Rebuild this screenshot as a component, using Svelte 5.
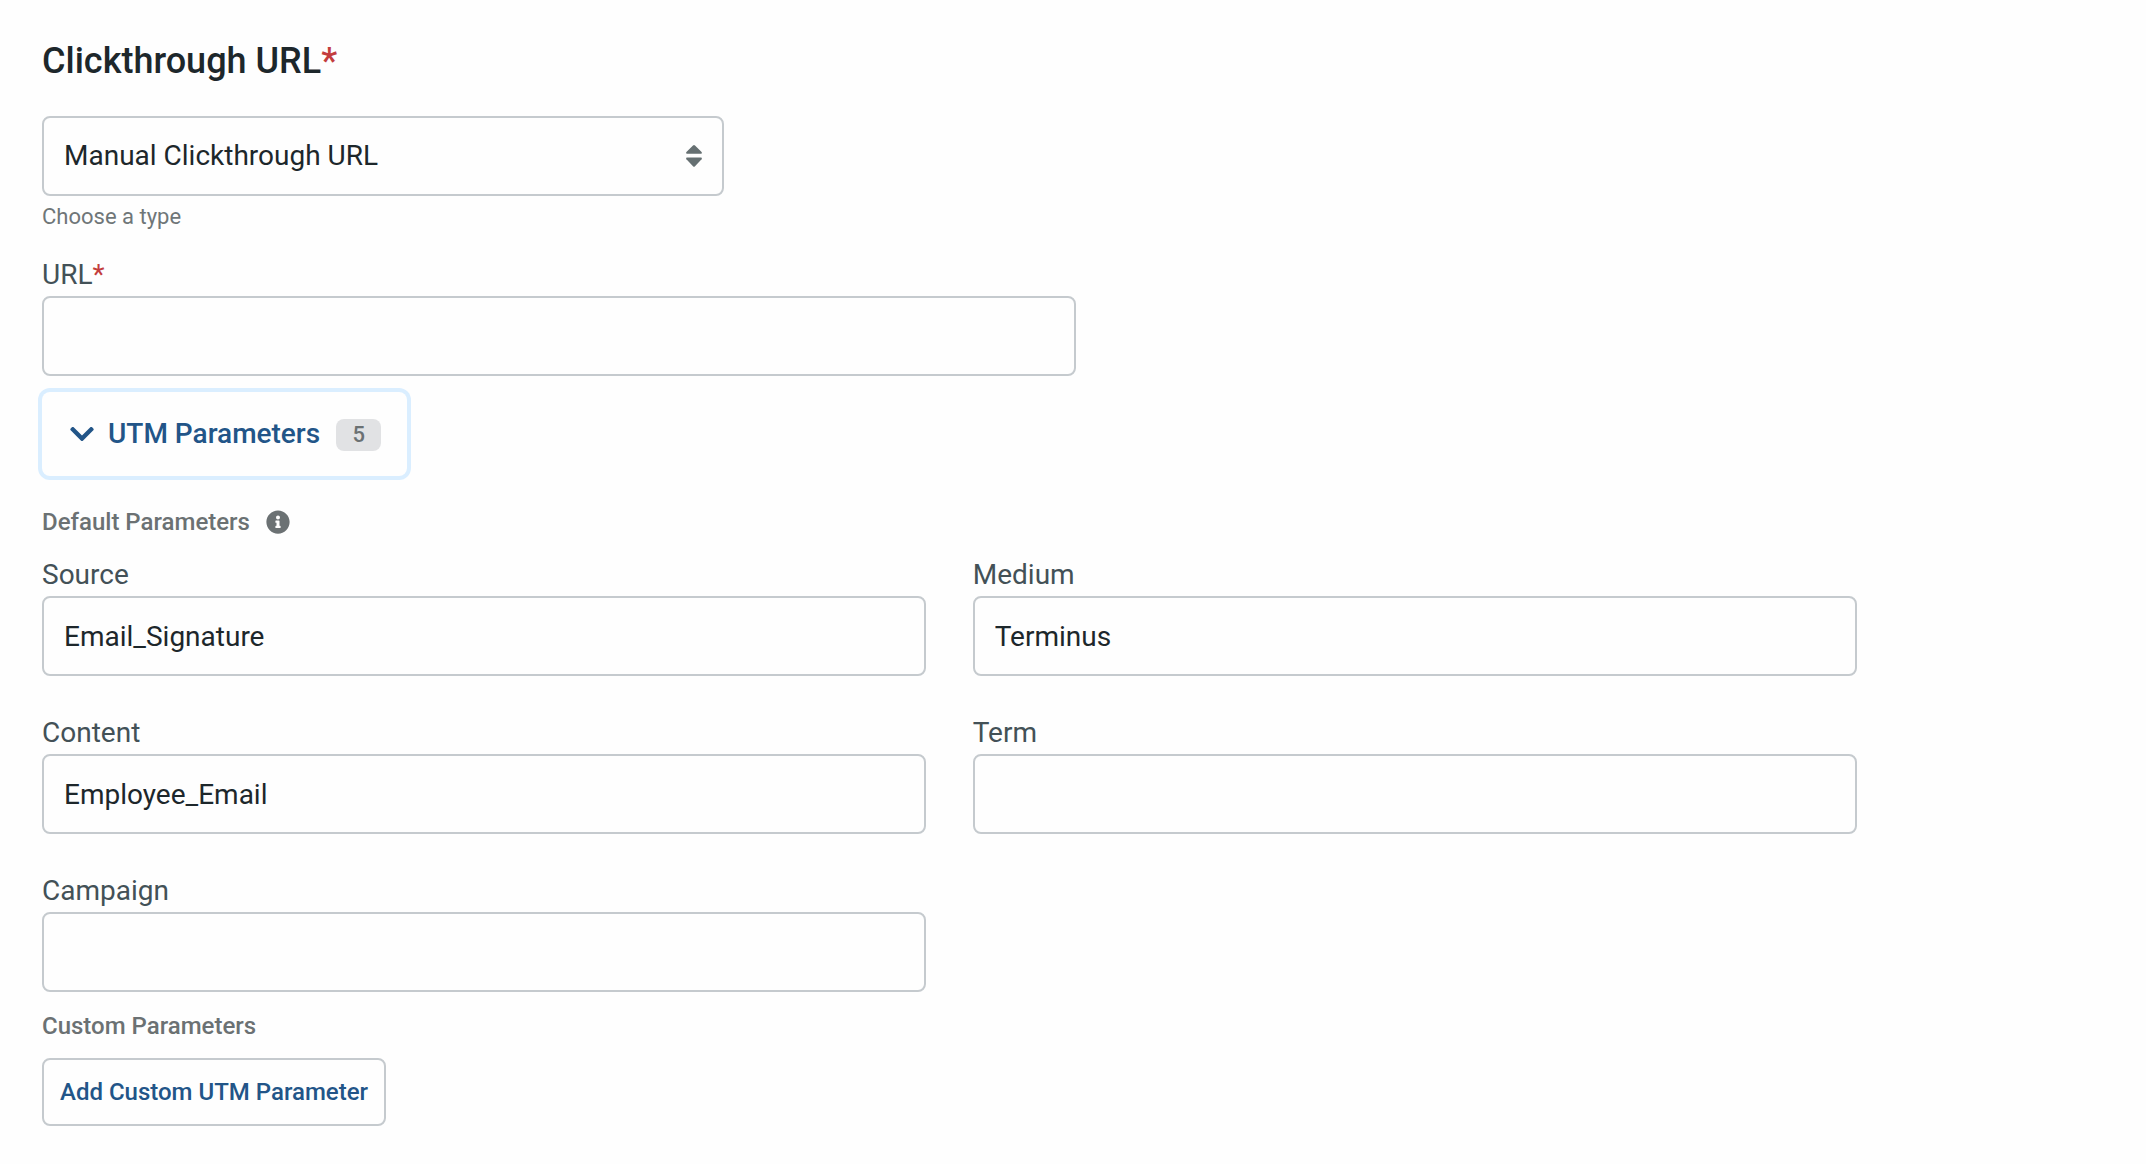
<script lang="ts">
    type Param = { id: string, label: string, value: string }

    let clickthroughType = $state('manual')
    let url = $state('')
    let expanded = $state(true)

    let params: Param[] = $state([
        { id: 'source', label: 'Source', value: 'Email_Signature' },
        { id: 'medium', label: 'Medium', value: 'Terminus' },
        { id: 'content', label: 'Content', value: 'Employee_Email' },
        { id: 'term', label: 'Term', value: '' },
        { id: 'campaign', label: 'Campaign', value: '' },
    ])

    const toggle = () => {
        expanded = !expanded
    }
</script>

<form>
    <h2>Clickthrough URL<span class="required">*</span></h2>

    <div class="type">
        <div class="select">
            <select id="type" bind:value={clickthroughType}>
                <option value="manual">Manual Clickthrough URL</option>
            </select>
            <svg viewBox="0 0 16 24" aria-hidden="true">
                <path d="M7 1.4Q8 .4 9 1.4L15.6 7.9Q16.4 9.7 15 9.7H1Q-.4 9.7.4 7.9Z" />
                <path d="M7 22.2Q8 23.2 9 22.2L15.6 15.2Q16.4 13.4 15 13.4H1Q-.4 13.4.4 15.2Z" />
            </svg>
        </div>
        <label class="hint" for="type">Choose a type</label>
    </div>

    <div class="field url">
        <label for="url">URL<span class="required">*</span></label>
        <input id="url" type="text" bind:value={url} />
    </div>

    <button type="button" class="toggle" aria-expanded={expanded} onclick={toggle}>
        <svg class:collapsed={!expanded} viewBox="0 0 448 512" aria-hidden="true">
            <path d="M207.029 381.476L12.686 187.132c-9.373-9.373-9.373-24.569 0-33.941l22.667-22.667c9.357-9.357 24.522-9.375 33.901-.04L224 284.505l154.745-154.021c9.379-9.335 24.544-9.317 33.901.04l22.667 22.667c9.373 9.373 9.373 24.569 0 33.941L240.971 381.476c-9.373 9.372-24.569 9.372-33.942 0z" />
        </svg>
        <span>UTM Parameters</span>
        <span class="badge">{params.length}</span>
    </button>

    {#if expanded}
        <h3 class="default">
            Default Parameters
            <svg viewBox="0 0 512 512" aria-hidden="true">
                <path d="M256 8C119.043 8 8 119.083 8 256c0 136.997 111.043 248 248 248s248-111.003 248-248C504 119.083 392.957 8 256 8zm0 110c23.196 0 42 18.804 42 42s-18.804 42-42 42-42-18.804-42-42 18.804-42 42-42zm56 254c0 6.627-5.373 12-12 12h-88c-6.627 0-12-5.373-12-12v-24c0-6.627 5.373-12 12-12h12v-64h-12c-6.627 0-12-5.373-12-12v-24c0-6.627 5.373-12 12-12h64c6.627 0 12 5.373 12 12v100h12c6.627 0 12 5.373 12 12v24z" />
            </svg>
        </h3>

        <div class="params">
            {#each params as param (param.id)}
                <div class="field">
                    <label for={param.id}>{param.label}</label>
                    <input id={param.id} type="text" bind:value={param.value} />
                </div>
            {/each}
        </div>

        <h3 class="custom">Custom Parameters</h3>
        <button type="button" class="add">Add Custom UTM Parameter</button>
    {/if}
</form>

<style>
    :global(body) {
        background: #fefefe;
    }

    form {
        padding: 38px 42px;
        font-family: Roboto, sans-serif;
        font-size: 28px;
        line-height: 34px;
        color: #1d272b;
    }

    h2 {
        margin: 0 0 32px;
        font-size: 36px;
        font-weight: 500;
        line-height: 46px;
    }

    h3 {
        margin: 0;
        font-size: 24px;
        font-weight: 500;
        line-height: 28px;
        color: #6b7173;
    }

    .required {
        color: #c33d3d;
    }

    .type {
        display: flex;
        flex-direction: column;
        gap: 6px;
        max-width: 682px;
        margin-bottom: 26px;
    }

    .select {
        position: relative;
    }

    .select svg {
        position: absolute;
        top: 28px;
        right: 22px;
        width: 16px;
        height: 24px;
        fill: #667072;
        pointer-events: none;
    }

    .hint {
        font-size: 22px;
        line-height: 30px;
        color: #6f7678;
    }

    .field {
        display: flex;
        flex-direction: column;
        gap: 4px;
        color: #435157;
    }

    .url {
        max-width: 1034px;
        margin-bottom: 16px;
    }

    input,
    select {
        display: block;
        box-sizing: border-box;
        width: 100%;
        height: 80px;
        margin: 0;
        padding: 0 20px;
        border: 2px solid #c5cace;
        border-radius: 8px;
        background: #fefefe;
        font: inherit;
        color: #1d272b;
        appearance: none;
    }

    button {
        border-radius: 8px;
        background: #fefefe;
        font-family: inherit;
        font-weight: 500;
        color: #225588;
        cursor: pointer;
    }

    .toggle {
        display: flex;
        align-items: center;
        height: 84px;
        padding: 0 26px 0 28px;
        border: none;
        box-shadow: 0 0 0 4px #daeeff;
        font-size: 28px;
        line-height: 32px;
    }

    .toggle svg {
        width: 24px;
        height: 28px;
        margin-right: 14px;
        fill: currentColor;
    }

    .toggle svg.collapsed {
        transform: rotate(-90deg);
    }

    .badge {
        min-width: 45px;
        margin: 2px 0 0 16px;
        border-radius: 8px;
        background: #e1e2e4;
        font-size: 22px;
        color: #6b7173;
    }

    .default {
        display: flex;
        align-items: center;
        gap: 16px;
        margin: 32px 0 22px;
    }

    .default svg {
        width: 24px;
        height: 24px;
        fill: currentColor;
    }

    .params {
        display: grid;
        grid-template-columns: 1fr 1fr;
        gap: 40px 47px;
        width: 88%;
    }

    .custom {
        margin: 20px 0 18px;
    }

    .add {
        height: 68px;
        padding: 0 16px;
        border: 2px solid #c5cace;
        font-size: 24px;
        line-height: 28px;
    }
</style>
